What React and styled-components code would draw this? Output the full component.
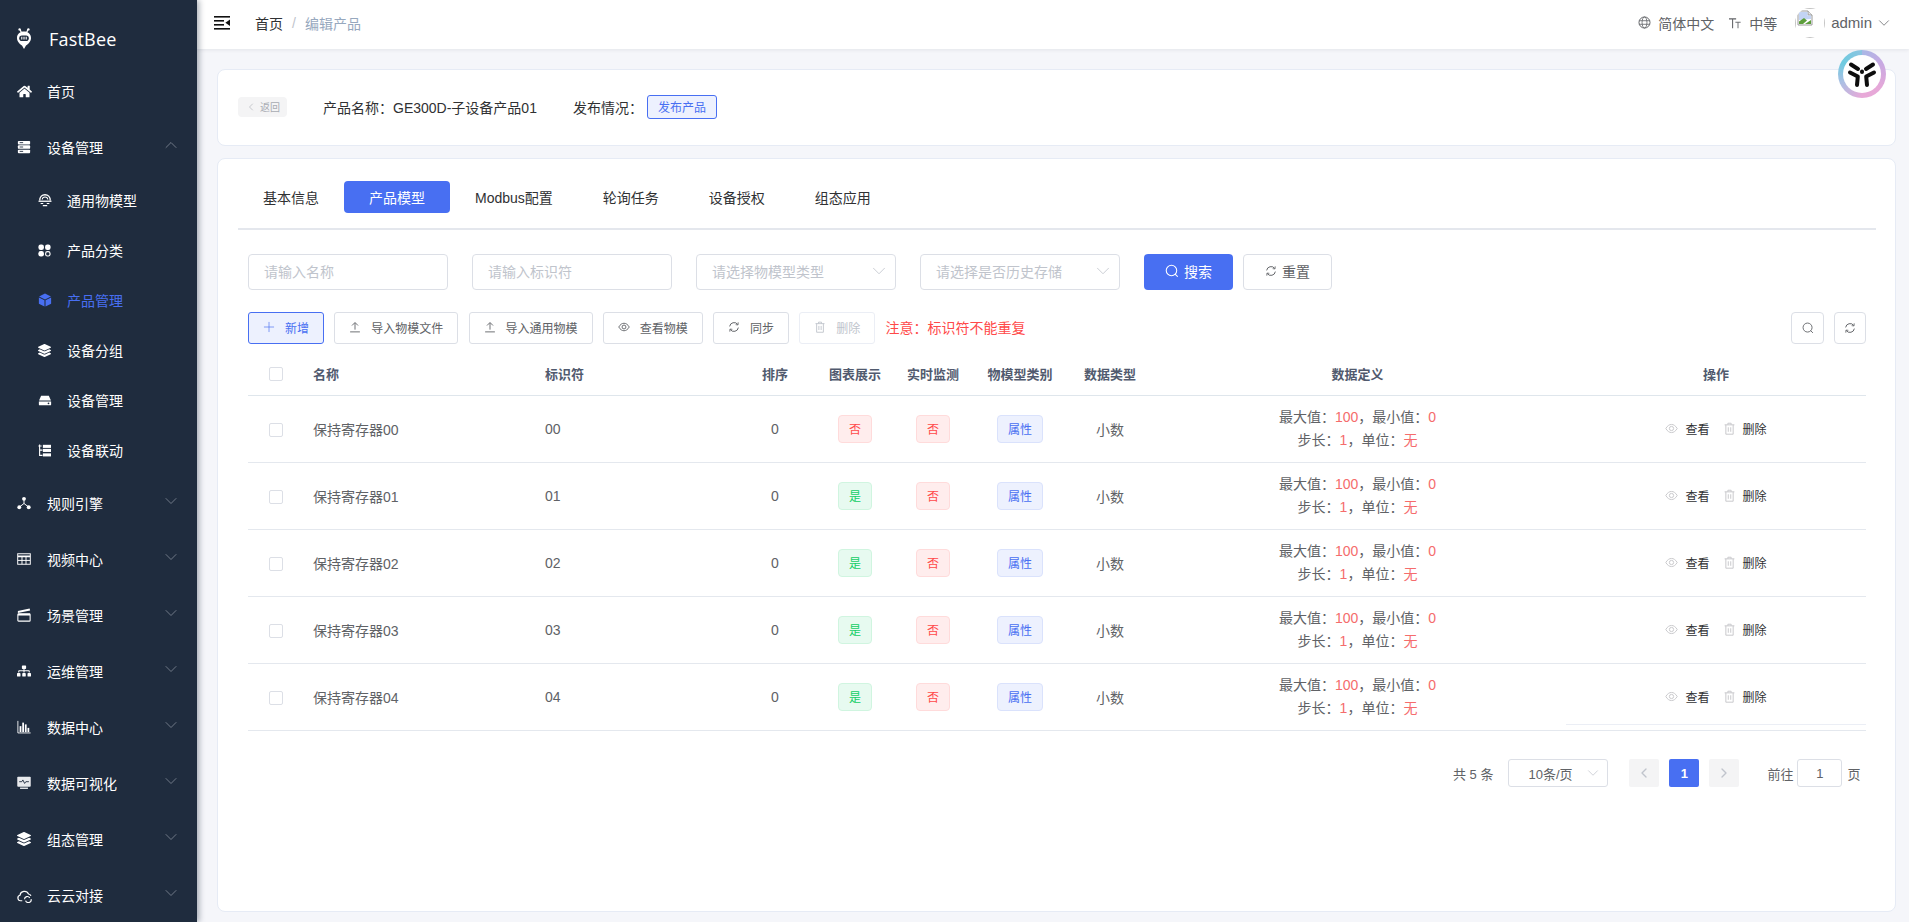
import React from 'react';
import styled, { createGlobalStyle } from 'styled-components';
import { FaHome, FaLayerGroup, FaSitemap } from 'react-icons/fa';
import { ChevronDown, ChevronLeft, ChevronRight, ChevronUp, Plus } from 'lucide-react';

const FONT = '"Liberation Sans", "Noto Sans CJK SC", sans-serif';
const PRIMARY = '#486ff2';

const GlobalStyle = createGlobalStyle`
  html, body {
    margin: 0;
    height: 100%;
    overflow: hidden;
    background: #f5f6fa;
    font-family: ${FONT};
    font-size: 14px;
  }
  * { box-sizing: border-box; }
`;

// small drawn icons
const Svg = ({ size = 14, vb = '0 0 16 16', children, ...rest }) => (
  <svg width={size} height={size} viewBox={vb} fill="none" {...rest}>{children}</svg>
);

const IconServer = () => (
  <Svg size={14}>
    <rect x="1" y="1" width="14" height="4" rx="1" fill="#fff" />
    <rect x="1" y="6" width="14" height="4" rx="1" fill="#fff" />
    <rect x="1" y="11" width="14" height="4" rx="1" fill="#fff" />
    <path d="M3 3h4M3 8h4M3 13h4" stroke="#1f2c3e" strokeWidth="1" />
  </Svg>
);
const IconDome = () => (
  <Svg size={14}>
    <path d="M2 8.500C2 4.500 4.600 2 8 2s6 2.500 6 6.500" stroke="#fff" strokeWidth="1.500" />
    <path d="M4.800 7.500C5 5.500 6.200 4.600 8 4.600s3 .9 3.200 2.900" stroke="#fff" strokeWidth="1.200" />
    <path d="M.6 9.400h14.800" stroke="#fff" strokeWidth="1.500" />
    <path d="M3 12h3M10 12h3M5.500 14.400h5" stroke="#fff" strokeWidth="1.400" />
  </Svg>
);
const IconCategory = () => (
  <Svg size={13}>
    <rect x=".5" y=".5" width="6.800" height="6.800" rx="2.800" fill="#fff" />
    <rect x="8.700" y=".5" width="6.800" height="6.800" rx="2.800" fill="#fff" />
    <rect x=".5" y="8.700" width="6.800" height="6.800" rx="2.800" fill="#fff" />
    <rect x="9.400" y="9.400" width="5.400" height="5.400" rx="2.300" stroke="#fff" strokeWidth="1.400" />
  </Svg>
);
const IconCube = () => (
  <Svg size={14}>
    <path d="M8 .6 14.800 4 8 7.300 1.200 4z" fill={PRIMARY} />
    <path d="M1 5.200 7.400 8.400v7L1 12.200zM15 5.200 8.600 8.400v7l6.400-3.200z" fill={PRIMARY} />
  </Svg>
);
const IconDrive = () => (
  <Svg size={14}>
    <path d="M3.600 3h8.800l2.400 5.600H1.200z" fill="#fff" />
    <path d="M1 9.600h14V13a1 1 0 0 1-1 1H2a1 1 0 0 1-1-1z" fill="#fff" />
    <circle cx="12" cy="11.800" r="1" fill="#1f2c3e" />
  </Svg>
);
const IconTree = () => (
  <Svg size={13}>
    <path d="M2 .5v13.500h3.500M2 7.500h3.500M.5 2.500h4" stroke="#fff" strokeWidth="1.400" />
    <rect x="6" y="1" width="10" height="3.800" fill="#fff" />
    <rect x="6" y="6" width="10" height="3.800" fill="#fff" />
    <rect x="6" y="11.500" width="10" height="3.800" fill="#fff" />
  </Svg>
);
const IconNodes = () => (
  <Svg size={14}>
    <path d="M8 4 8 8.500 2.800 12.600M8 8.500l5.200 4.100" stroke="#fff" strokeWidth="1.100" />
    <circle cx="8" cy="3.200" r="2.200" fill="#fff" />
    <circle cx="2.600" cy="12.800" r="2.200" fill="#fff" />
    <circle cx="13.400" cy="12.800" r="2.200" fill="#fff" />
  </Svg>
);
const IconGrid = () => (
  <Svg size={14}>
    <rect x=".8" y="2" width="14.400" height="12" stroke="#fff" strokeWidth="1.100" />
    <path d="M1 5h14" stroke="#fff" strokeWidth="2" />
    <path d="M1 9.600h14M5.700 5v9M10.300 5v9" stroke="#fff" strokeWidth="1.100" />
  </Svg>
);
const IconClapper = () => (
  <Svg size={14}>
    <rect x="1" y="7" width="14" height="8" rx=".8" stroke="#fff" strokeWidth="1.200" />
    <rect x="1" y="6.200" width="14" height="2.400" fill="#fff" />
    <path d="M1 5.600V3.400L14.400.6l.6 2.200z" fill="#fff" />
  </Svg>
);
const IconBars = () => (
  <Svg size={14}>
    <path d="M1 1v13.800h14.600" stroke="#fff" strokeWidth="1" />
    <rect x="3" y="7" width="2" height="6.800" fill="#fff" />
    <rect x="6" y="3" width="2" height="10.800" fill="#fff" />
    <rect x="9" y="5" width="2" height="8.800" fill="#fff" />
    <rect x="12" y="9" width="2" height="4.800" fill="#fff" />
  </Svg>
);
const IconMonitor = () => (
  <Svg size={14}>
    <rect x=".3" y=".8" width="15.400" height="11.400" rx="1" fill="#e8eaed" />
    <path d="M2.500 6.500h3l1.200-2 2 4 1.400-2h3.500" stroke="#1f2c3e" strokeWidth="1" />
    <path d="M3.500 14h9" stroke="#e8eaed" strokeWidth="1.600" />
  </Svg>
);
const IconCloud = () => (
  <Svg size={15}>
    <path d="M5.600 13.600H3.800A3 3 0 0 1 3.200 7.700 4.800 4.800 0 0 1 12.300 6.400a3 3 0 0 1 2.600 2" stroke="#fff" strokeWidth="1.300" />
    <path d="M8 12a3 3 0 0 1 5.600-1.400M15 11.800a3 3 0 0 1-5.800 1.600" stroke="#fff" strokeWidth="1.200" />
  </Svg>
);
const IconLogo = () => (
  <svg width="16" height="22" viewBox="0 0 16 22" fill="none">
    <path d="M4 1.500 5.400 4.500M12 1.500 10.600 4.500" stroke="#fff" strokeWidth="1.300" />
    <circle cx="3.600" cy="1.400" r="1.200" fill="#fff" />
    <circle cx="12.400" cy="1.400" r="1.200" fill="#fff" />
    <path d="M8 3.600c4 0 7 2.600 7 6.400 0 3.600-2.800 6-5 7.600L8 21l-2-3.400C3.800 16 1 13.600 1 10c0-3.800 3-6.400 7-6.400z" fill="#fff" />
    <rect x="3.200" y="7.400" width="9.600" height="5.600" rx="2.800" fill="#1f2c3e" />
    <path d="M5.800 8.800v2.800M8 8.800v2.800M10.200 8.800v2.800" stroke="#fff" strokeWidth="1.100" />
  </svg>
);
const IconToggle = () => (
  <svg width="16" height="14" viewBox="0 0 16 14" fill="#111">
    <rect x="0" y="0" width="16" height="1.600" />
    <rect x="0" y="4" width="10" height="1.600" />
    <rect x="0" y="8" width="10" height="1.600" />
    <rect x="0" y="12" width="16" height="1.600" />
    <path d="M16 3.600v6.400L11.400 6.800z" />
  </svg>
);
const IconGlobe = () => (
  <Svg size={13}>
    <circle cx="8" cy="8" r="6.800" stroke="#606266" strokeWidth="1.200" />
    <ellipse cx="8" cy="8" rx="3" ry="6.800" stroke="#606266" strokeWidth="1" />
    <path d="M1.400 5.800h13.200M1.400 10.200h13.200" stroke="#606266" strokeWidth="1" />
  </Svg>
);
const IconSizeT = () => (
  <Svg size={12}>
    <path d="M0 2.500h9.500M4.800 2.500v12.500" stroke="#606266" strokeWidth="1.400" />
    <path d="M8.500 7h7M12 7v8" stroke="#606266" strokeWidth="1.200" />
  </Svg>
);
const IconSearch = ({ color = 'currentColor', size = 14 }) => (
  <Svg size={size}>
    <circle cx="7.400" cy="7.400" r="6" stroke={color} strokeWidth="1.200" />
    <path d="m11.800 11.800 2.400 2.400" stroke={color} strokeWidth="1.200" strokeLinecap="round" />
  </Svg>
);
const IconRefresh = ({ color = 'currentColor', size = 12 }) => (
  <Svg size={size}>
    <path d="M2.200 7.200A6 6 0 0 1 13 4.600" stroke={color} strokeWidth="1.300" />
    <path d="M13.800 8.800A6 6 0 0 1 3 11.400" stroke={color} strokeWidth="1.300" />
    <path d="m13.600 1.800-.2 3.400-3.200-.3M2.400 14.200l.2-3.400 3.200.3" stroke={color} strokeWidth="1.100" />
  </Svg>
);
const IconUpload = ({ color = 'currentColor', size = 12 }) => (
  <Svg size={size}>
    <path d="M1.500 14.500h13M8 11.500V2.500M4 6l4-4 4 4" stroke={color} strokeWidth="1.200" />
  </Svg>
);
const IconEye = ({ color = 'currentColor', size = 13 }) => (
  <Svg size={size}>
    <path d="M1 8c2-3.400 4.400-5 7-5s5 1.600 7 5c-2 3.400-4.400 5-7 5s-5-1.600-7-5z" stroke={color} strokeWidth="1.200" />
    <circle cx="8" cy="8" r="2.600" stroke={color} strokeWidth="1.200" />
  </Svg>
);
const IconTrash = ({ color = 'currentColor', size = 13 }) => (
  <Svg size={size}>
    <path d="M2 3.500h12M6 3.500V1.500h4v2M3.500 3.500v11.500h9V3.500M6.500 6.500v5.500M9.500 6.500v5.500" stroke={color} strokeWidth="1.200" />
  </Svg>
);
const IconBrokenImage = () => (
  <svg width="16" height="16" viewBox="0 0 16 16" fill="none">
    <path d="M1 1h10l4 4v10H1z" fill="#fff" stroke="#9a9a9a" strokeWidth="1" />
    <path d="M11 1v4h4" fill="#e6e6e6" stroke="#9a9a9a" strokeWidth="1" />
    <path d="M2 2h8.500v3.500H14V9L2 10z" fill="#c3d4f4" />
    <path d="M2 14v-2.500L7 8l3 2.500L6 14z" fill="#5d9e3c" />
    <path d="M8 14 14 10v4z" fill="#5d9e3c" />
  </svg>
);
const IconFloatLogo = () => (
  <svg width="30" height="28" viewBox="0 0 30 28" fill="none">
    <g stroke="#0d0d0d" strokeWidth="4" strokeLinecap="round" strokeLinejoin="round">
      <path d="M4 4.500 11 9" />
      <path d="M26 4.500 19 9" />
      <path d="M3 12.500 10.800 16.500 10 25" />
      <path d="M27 12.500 19.200 16.500 20 25" />
      <path d="M15 11.500 V 12" />
    </g>
  </svg>
);

// layout
const Layout = styled.div`
  display: flex;
  width: 1909px;
  height: 922px;
  overflow: hidden;
  position: relative;
`;

const Sidebar = styled.aside`
  width: 197px;
  height: 922px;
  flex: none;
  background: #1f2c3e;
  box-shadow: 2px 0 6px rgba(0, 21, 41, 0.35);
  position: relative;
  z-index: 2;
  overflow: hidden;
`;

const Brand = styled.div`
  height: 63px;
  display: flex;
  align-items: center;
  padding: 15px 0 0 16px;
  color: #fff;
  font-family: "Open Sans", ${FONT};
  font-size: 18px;
  letter-spacing: 0.2px;
  gap: 17px;
`;

const MenuRow = styled.div`
  height: ${(p) => (p.$sub ? 50 : 56)}px;
  display: flex;
  align-items: center;
  padding-left: ${(p) => (p.$sub ? 38 : 17)}px;
  color: ${(p) => (p.$active ? PRIMARY : '#fff')};
  font-size: 14px;
  position: relative;
`;

const MenuIcon = styled.span`
  width: ${(p) => (p.$sub ? 29 : 30)}px;
  display: inline-flex;
  align-items: center;
  flex: none;
`;

const MenuArrow = styled.span`
  position: absolute;
  left: 161px;
  top: 50%;
  margin-top: -12.5px;
  display: inline-flex;
  color: #7f8895;
`;

const Main = styled.main`
  flex: 1;
  min-width: 0;
  height: 922px;
`;

const Navbar = styled.header`
  height: 49px;
  background: #fff;
  box-shadow: 0 1px 4px rgba(0, 21, 41, 0.08);
  display: flex;
  align-items: center;
  padding: 0 16px 4px 17px;
  position: relative;
`;

const Toggle = styled.span`
  display: inline-flex;
  margin-right: 25px;
  margin-top: 1px;
`;

const Crumb = styled.span`
  color: ${(p) => (p.$muted ? '#97a8be' : '#303133')};
  ${(p) => p.$sep && 'margin: 0 9px; color: #c0c4cc;'}
`;

const NavRight = styled.div`
  margin-left: auto;
  display: flex;
  align-items: center;
  color: #606266;
`;

const NavItem = styled.span`
  display: inline-flex;
  align-items: center;
  gap: ${(p) => p.$inner || 7}px;
  margin-right: ${(p) => p.$gap || 0}px;
  font-size: ${(p) => p.$fs || 14}px;
`;

const Avatar = styled.span`
  width: 30px;
  height: 30px;
  border-radius: 50%;
  overflow: hidden;
  position: relative;
  margin-right: 6px;
  display: block;
  svg {
    position: absolute;
    left: 2px;
    top: 2px;
  }
  &::after {
    content: '';
    position: absolute;
    inset: 0;
    border: 1px solid #c4c4c4;
  }
`;

const FloatBadge = styled.div`
  position: absolute;
  left: 1838px;
  top: 50px;
  width: 48px;
  height: 48px;
  border-radius: 50%;
  background: conic-gradient(from 0deg, #a9b8e6, #c7a9e2 60deg, #e6a8d8 130deg, #e8a9d8 180deg, #a9c0e4 250deg, #6ecbe0 300deg, #8cc4e0 360deg);
  display: flex;
  align-items: center;
  justify-content: center;
  z-index: 5;
  &::before {
    content: '';
    position: absolute;
    inset: 5px;
    border-radius: 50%;
    background: #fff;
  }
  svg {
    position: relative;
  }
`;

const Content = styled.div`
  padding: 20px 13px 0 20px;
`;

const Card = styled.section`
  background: #fff;
  border: 1px solid #e6ebf5;
  border-radius: 8px;
  height: ${(p) => p.$h}px;
  margin-bottom: 12px;
  position: relative;
`;

const ProductBar = styled(Card)`
  display: flex;
  align-items: center;
  padding: 0 0 2px 20px;
  color: #303133;
`;

const BackButton = styled.span`
  width: 49px;
  height: 20px;
  background: #f4f4f5;
  border-radius: 4px;
  color: #a8abb2;
  font-size: 10px;
  display: inline-flex;
  align-items: center;
  justify-content: center;
  gap: 3px;
  margin-right: 36px;
`;

const PublishLabel = styled.span`
  margin: 0 4px 0 36px;
`;

const PublishTag = styled.span`
  width: 70px;
  height: 24px;
  display: inline-flex;
  align-items: center;
  justify-content: center;
  font-size: 12px;
  color: ${PRIMARY};
  background: #edf1fe;
  border: 1px solid ${PRIMARY};
  border-radius: 3px;
`;

const Tabs = styled.div`
  margin: 22px 19px 0 20px;
  height: 49px;
  border-bottom: 2px solid #e4e7ed;
  display: flex;
  align-items: flex-start;
`;

const Tab = styled.span`
  height: 32px;
  padding: 0 25px;
  display: inline-flex;
  align-items: center;
  color: ${(p) => (p.$active ? '#fff' : '#303133')};
  background: ${(p) => (p.$active ? PRIMARY : 'transparent')};
  border-radius: 4px;
`;

const FilterRow = styled.div`
  display: flex;
  margin: 24px 0 0 30px;
`;

const InputBox = styled.div`
  width: 200px;
  height: 36px;
  border: 1px solid #dcdfe6;
  border-radius: 4px;
  margin-right: 24px;
  padding: 0 0 2px 15px;
  display: flex;
  align-items: center;
  justify-content: space-between;
  color: #c0c4cc;
  background: #fff;
  svg { margin-right: 5px; }
`;

const SearchButton = styled.button`
  width: 89px;
  height: 36px;
  border: 0;
  border-radius: 4px;
  padding: 0 0 2px;
  background: ${PRIMARY};
  color: #fff;
  font: 14px ${FONT};
  display: inline-flex;
  align-items: center;
  justify-content: center;
  gap: 5px;
  margin-right: 10px;
`;

const ResetButton = styled(SearchButton)`
  width: 89px;
  background: #fff;
  color: #606266;
  border: 1px solid #dcdfe6;
`;

const ToolRow = styled.div`
  display: flex;
  align-items: center;
  margin: 22px 29px 0 30px;
`;

const ToolButton = styled.button`
  height: 32px;
  padding: 0 14px 2px;
  margin-right: 10.25px;
  border-radius: 3px;
  border: 1px solid ${(p) => (p.$primary ? PRIMARY : p.$disabled ? '#ebeef5' : '#dcdfe6')};
  background: ${(p) => (p.$primary ? '#edf1fe' : '#fff')};
  color: ${(p) => (p.$primary ? PRIMARY : p.$disabled ? '#c0c4cc' : '#606266')};
  font: 12px ${FONT};
  display: inline-flex;
  align-items: center;
  gap: 10px;
`;

const Warn = styled.span`
  color: #ff4949;
  margin-top: -3px;
`;

const RoundTool = styled.button`
  width: ${(p) => p.$w}px;
  height: 32px;
  border: 1px solid #dcdfe6;
  border-radius: 4px;
  background: #fff;
  color: #606266;
  margin-left: ${(p) => p.$ml || 0}px;
  display: inline-flex;
  align-items: center;
  justify-content: center;
  padding: 0;
`;

const Table = styled.div`
  margin: 8px 29px 0 30px;
  position: relative;
`;

const COLS = '55px 232px 205px 70px 90px 66px 108px 72px 420px 300px';

const HeadRow = styled.div`
  display: grid;
  grid-template-columns: ${COLS};
  height: 44px;
  align-items: center;
  border-bottom: 1px solid #dfe6ec;
  color: #515a6e;
  font-size: 13px;
  font-weight: 700;
`;

const BodyRow = styled.div`
  display: grid;
  grid-template-columns: ${COLS};
  height: 67px;
  padding-bottom: 1px;
  align-items: center;
  border-bottom: 1px solid #e4e8ee;
  color: #606266;
  font-size: 14px;
`;

const Cell = styled.div`
  padding: 0 ${(p) => (p.$left ? 10 : 0)}px;
  padding-left: ${(p) => (p.$left ? 10 : p.$pl || 0)}px;
  text-align: ${(p) => (p.$left ? 'left' : 'center')};
  display: ${(p) => (p.$flex ? 'flex' : 'block')};
  justify-content: center;
  align-items: center;
`;

const Check = styled.span`
  width: 14px;
  height: 14px;
  display: inline-block;
  border: 1px solid #dcdfe6;
  border-radius: 2px;
  background: #fff;
  vertical-align: middle;
`;

const TONES = {
  danger: { bg: '#ffeded', line: '#ffdbdb', fg: '#ff4949' },
  success: { bg: '#e7faf0', line: '#d0f5e0', fg: '#13ce66' },
  primary: { bg: '#edf1fe', line: '#dae2fc', fg: PRIMARY },
};

const Tag = styled.span`
  height: 28px;
  padding: 0 10px;
  border-radius: 4px;
  font-size: 12px;
  display: inline-flex;
  align-items: center;
  background: ${(p) => TONES[p.$tone].bg};
  border: 1px solid ${(p) => TONES[p.$tone].line};
  color: ${(p) => TONES[p.$tone].fg};
`;

const DefLine = styled.div`
  line-height: 23px;
  font-size: 14px;
  color: #606266;
`;

const Red = styled.span`
  color: #f56c6c;
`;

const OpLink = styled.span`
  display: inline-flex;
  align-items: center;
  gap: 7px;
  color: #303133;
  font-size: 12px;
  margin-right: 13px;
  svg { color: #c8c9cc; }
`;

const FixedLine = styled.div`
  position: absolute;
  right: 0;
  width: 300px;
  height: 1px;
  bottom: 6px;
  background: #ebeef5;
`;

const Pager = styled.div`
  position: absolute;
  top: 600px;
  left: 1235px;
  display: flex;
  align-items: center;
  height: 28px;
  color: #606266;
  font-size: 13px;
`;

const PageSize = styled.div`
  width: 100px;
  height: 28px;
  border: 1px solid #dcdfe6;
  border-radius: 3px;
  margin: 0 21px 0 15px;
  display: flex;
  align-items: center;
  justify-content: space-between;
  padding: 0 5px 0 19px;
  svg { color: #c0c4cc; }
`;

const PageBtn = styled.span`
  width: 30px;
  height: 28px;
  margin-right: ${(p) => p.$mr || 10}px;
  border-radius: 2px;
  background: ${(p) => (p.$active ? PRIMARY : '#f4f4f5')};
  color: ${(p) => (p.$active ? '#fff' : '#c0c4cc')};
  font-weight: 700;
  display: inline-flex;
  align-items: center;
  justify-content: center;
`;

const JumpInput = styled.span`
  width: 45px;
  height: 28px;
  margin: 0 5px 0 4px;
  border: 1px solid #dcdfe6;
  border-radius: 3px;
  display: inline-flex;
  align-items: center;
  justify-content: center;
`;

const PlusIcon = styled(Plus)`
  margin: 0 -2px;
`;

const menu = [
  { label: '首页', icon: <FaHome size={15} color="#fff" /> },
  { label: '设备管理', icon: <IconServer />, open: true },
  { label: '通用物模型', icon: <IconDome />, sub: true },
  { label: '产品分类', icon: <IconCategory />, sub: true },
  { label: '产品管理', icon: <IconCube />, sub: true, active: true },
  { label: '设备分组', icon: <FaLayerGroup size={13} color="#fff" />, sub: true },
  { label: '设备管理', icon: <IconDrive />, sub: true },
  { label: '设备联动', icon: <IconTree />, sub: true },
  { label: '规则引擎', icon: <IconNodes />, arrow: true },
  { label: '视频中心', icon: <IconGrid />, arrow: true },
  { label: '场景管理', icon: <IconClapper />, arrow: true },
  { label: '运维管理', icon: <FaSitemap size={14} color="#fff" />, arrow: true },
  { label: '数据中心', icon: <IconBars />, arrow: true },
  { label: '数据可视化', icon: <IconMonitor />, arrow: true },
  { label: '组态管理', icon: <FaLayerGroup size={14} color="#fff" />, arrow: true },
  { label: '云云对接', icon: <IconCloud />, arrow: true },
];

const tabs = ['基本信息', '产品模型', 'Modbus配置', '轮询任务', '设备授权', '组态应用'];

const rows = [
  { name: '保持寄存器00', id: '00', chart: false },
  { name: '保持寄存器01', id: '01', chart: true },
  { name: '保持寄存器02', id: '02', chart: true },
  { name: '保持寄存器03', id: '03', chart: true },
  { name: '保持寄存器04', id: '04', chart: true },
];

const heads = ['图表展示', '实时监测', '物模型类别', '数据类型'];

export default function App() {
  return (
    <Layout>
      <GlobalStyle />
      <Sidebar>
        <Brand>
          <IconLogo />
          FastBee
        </Brand>
        {menu.map((m, i) => (
          <MenuRow key={i} $sub={m.sub} $active={m.active}>
            <MenuIcon $sub={m.sub}>{m.icon}</MenuIcon>
            {m.label}
            {m.open && <MenuArrow><ChevronUp size={20} strokeWidth={1} /></MenuArrow>}
            {m.arrow && <MenuArrow><ChevronDown size={20} strokeWidth={1} /></MenuArrow>}
          </MenuRow>
        ))}
      </Sidebar>

      <Main>
        <Navbar>
          <Toggle><IconToggle /></Toggle>
          <Crumb>首页</Crumb>
          <Crumb $sep>/</Crumb>
          <Crumb $muted>编辑产品</Crumb>
          <NavRight>
            <NavItem $gap={15}><IconGlobe />简体中文</NavItem>
            <NavItem $gap={18} $inner={8}><IconSizeT />中等</NavItem>
            <Avatar><IconBrokenImage /></Avatar>
            <NavItem $fs={15} $inner={3}>admin <ChevronDown size={18} strokeWidth={1} /></NavItem>
          </NavRight>
        </Navbar>
        <FloatBadge><IconFloatLogo /></FloatBadge>

        <Content>
          <ProductBar $h={77}>
            <BackButton><ChevronLeft size={12} strokeWidth={1.2} />返回</BackButton>
            产品名称：GE300D-子设备产品01
            <PublishLabel>发布情况：</PublishLabel>
            <PublishTag>发布产品</PublishTag>
          </ProductBar>

          <Card $h={754}>
            <Tabs>
              {tabs.map((t, i) => (
                <Tab key={t} $active={i === 1}>{t}</Tab>
              ))}
            </Tabs>

            <FilterRow>
              <InputBox>请输入名称</InputBox>
              <InputBox>请输入标识符</InputBox>
              <InputBox>请选择物模型类型<ChevronDown size={22} strokeWidth={0.9} /></InputBox>
              <InputBox>请选择是否历史存储<ChevronDown size={22} strokeWidth={0.9} /></InputBox>
              <SearchButton><IconSearch />搜索</SearchButton>
              <ResetButton><IconRefresh />重置</ResetButton>
            </FilterRow>

            <ToolRow>
              <ToolButton $primary><PlusIcon size={16} strokeWidth={1} />新增</ToolButton>
              <ToolButton><IconUpload />导入物模文件</ToolButton>
              <ToolButton><IconUpload />导入通用物模</ToolButton>
              <ToolButton><IconEye size={12} />查看物模</ToolButton>
              <ToolButton><IconRefresh />同步</ToolButton>
              <ToolButton $disabled><IconTrash size={12} />删除</ToolButton>
              <Warn>注意：标识符不能重复</Warn>
              <RoundTool $w={33} style={{ marginLeft: 'auto' }}><IconSearch size={12} /></RoundTool>
              <RoundTool $w={32} $ml={10}><IconRefresh /></RoundTool>
            </ToolRow>

            <Table>
              <HeadRow>
                <Cell><Check /></Cell>
                <Cell $left>名称</Cell>
                <Cell $left>标识符</Cell>
                <Cell>排序</Cell>
                {heads.map((h) => <Cell key={h}>{h}</Cell>)}
                <Cell $pl={3}>数据定义</Cell>
                <Cell>操作</Cell>
              </HeadRow>
              {rows.map((r) => (
                <BodyRow key={r.id}>
                  <Cell><Check /></Cell>
                  <Cell $left>{r.name}</Cell>
                  <Cell $left>{r.id}</Cell>
                  <Cell>0</Cell>
                  <Cell><Tag $tone={r.chart ? 'success' : 'danger'}>{r.chart ? '是' : '否'}</Tag></Cell>
                  <Cell><Tag $tone="danger">否</Tag></Cell>
                  <Cell><Tag $tone="primary">属性</Tag></Cell>
                  <Cell>小数</Cell>
                  <Cell $pl={3}>
                    <DefLine>最大值：<Red>100</Red>，最小值：<Red>0</Red></DefLine>
                    <DefLine>步长：<Red>1</Red>，单位：<Red>无</Red></DefLine>
                  </Cell>
                  <Cell $flex>
                    <OpLink><IconEye />查看</OpLink>
                    <OpLink style={{ marginRight: 0 }}><IconTrash />删除</OpLink>
                  </Cell>
                </BodyRow>
              ))}
              <FixedLine />
            </Table>

            <Pager>
              共 5 条
              <PageSize>10条/页<ChevronDown size={18} strokeWidth={1} /></PageSize>
              <PageBtn><ChevronLeft size={16} /></PageBtn>
              <PageBtn $active>1</PageBtn>
              <PageBtn $mr={28}><ChevronRight size={16} /></PageBtn>
              前往
              <JumpInput>1</JumpInput>
              页
            </Pager>
          </Card>
        </Content>
      </Main>
    </Layout>
  );
}
